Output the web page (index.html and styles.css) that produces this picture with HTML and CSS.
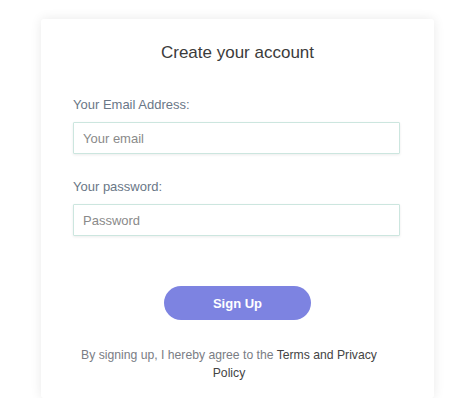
FILE: index.html
```html
<!DOCTYPE html>
<html>
<head>
<meta charset="utf-8">
<link rel="stylesheet" href="styles.css">
</head>
<body>
<div class="card">
  <h1 class="title">Create your account</h1>
  <form class="form">
    <label class="label" for="email">Your Email Address:</label>
    <input class="input" id="email" type="text" placeholder="Your email">
    <label class="label label-second" for="pw">Your password:</label>
    <input class="input" id="pw" type="password" placeholder="Password">
    <button class="btn" type="button">Sign Up</button>
  </form>
  <p class="terms">By signing up, I hereby agree to the <span class="link">Terms and Privacy</span> <span class="link">Policy</span></p>
</div>
</body>
</html>
```
FILE: styles.css
```css
html, body {
  margin: 0;
  padding: 0;
  background: #ffffff;
  font-family: "Liberation Sans", Arial, sans-serif;
}
body {
  padding-top: 19px;
}
.card {
  margin-left: 41px;
  width: 393px;
  height: 379px;
  box-sizing: border-box;
  padding: 24px 32px 0 32px;
  background: #ffffff;
  border-radius: 3px;
  box-shadow: 0 0 12px rgba(0, 0, 0, 0.09);
}
.title {
  margin: 0;
  font-size: 17px;
  line-height: 20px;
  font-weight: normal;
  color: #3b3b3b;
  text-align: center;
}
.form {
  display: flex;
  flex-direction: column;
  margin-top: 34px;
}
.label {
  font-size: 13px;
  line-height: 16px;
  color: #6a7787;
  margin-bottom: 9px;
}
.label-second {
  margin-top: 25px;
}
.input {
  width: 327px;
  height: 32px;
  box-sizing: border-box;
  border: 1px solid #cce6df;
  border-radius: 1px;
  padding: 0 9px;
  font-family: "Liberation Sans", Arial, sans-serif;
  font-size: 13px;
  color: #333;
  background: #fff;
  box-shadow: 0 1px 3px rgba(0, 0, 0, 0.08);
  outline: none;
}
.input::placeholder {
  color: #8a8a8a;
}
.btn {
  align-self: center;
  margin-top: 50px;
  width: 147px;
  height: 34px;
  border: none;
  border-radius: 17px;
  background: #7d83e1;
  color: #ffffff;
  font-family: "Liberation Sans", Arial, sans-serif;
  font-size: 13px;
  font-weight: bold;
  cursor: pointer;
}
.terms {
  margin: 26px 0 0 0;
  padding-right: 17px;
  font-size: 12.2px;
  line-height: 18px;
  color: #7a7d84;
  text-align: center;
}
.link {
  color: #444444;
}
```
